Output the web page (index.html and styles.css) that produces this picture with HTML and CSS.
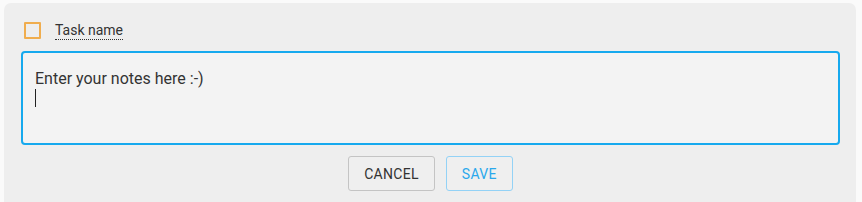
FILE: index.html
```html
<!DOCTYPE html>
<html>

<head>
    <meta charset="utf-8">
    <title>Task notes</title>
    <link rel="stylesheet" href="styles.css">
</head>

<body>

    <section class="card">
        <div class="task">
            <span class="check"></span>
            <span class="name">Task name</span>
        </div>

        <div class="notes">
            <p>Enter your notes here :-)</p>
            <p><span class="caret"></span></p>
        </div>

        <div class="actions">
            <button class="btn cancel">Cancel</button>
            <button class="btn save">Save</button>
        </div>
    </section>

</body>

</html>
```

FILE: styles.css
```css
/* General styles */

html {
    background-color: #fafafa;
    font-family: Roboto, "Noto Sans", sans-serif;
}

body {
    margin: 0;
}

* {
    box-sizing: border-box;
}

/* Card */

.card {
    margin: 3px 6px 0 4px;
    padding: 19px 16px 24px 17px;
    background-color: #eeeeee;
    border-radius: 7px;
}

.task {
    display: flex;
    align-items: center;
    padding-left: 3px;
    height: 17px;
}

.check {
    width: 17px;
    height: 17px;
    border: 2px solid #f0ad4e;
    border-radius: 1px;
}

.name {
    margin-left: 14px;
    font-size: 14px;
    line-height: 17px;
    color: #333;
    border-bottom: 1px dotted #333;
}

/* Notes box */

.notes {
    margin-top: 12px;
    height: 94px;
    padding: 16px 12px 0 12px;
    background-color: #f3f3f3;
    border: 2px solid #16a9ee;
    border-radius: 4px;
}

.notes p {
    margin: 0;
    font-size: 16px;
    line-height: 19px;
    height: 19px;
    color: #333;
}

.caret {
    display: inline-block;
    width: 1px;
    height: 18px;
    margin-top: 1px;
    background-color: #222;
    vertical-align: top;
}

/* Buttons */

.actions {
    display: flex;
    justify-content: center;
    gap: 11px;
    margin-top: 11px;
}

.btn {
    height: 35px;
    padding: 0 15px;
    font-family: inherit;
    font-size: 14px;
    letter-spacing: 0.3px;
    text-transform: uppercase;
    background-color: #efefef;
    border: 1px solid #c4c4c4;
    border-radius: 3px;
    color: #333;
}

.save {
    border-color: #93d2f6;
    color: #2aa8ec;
}
```
